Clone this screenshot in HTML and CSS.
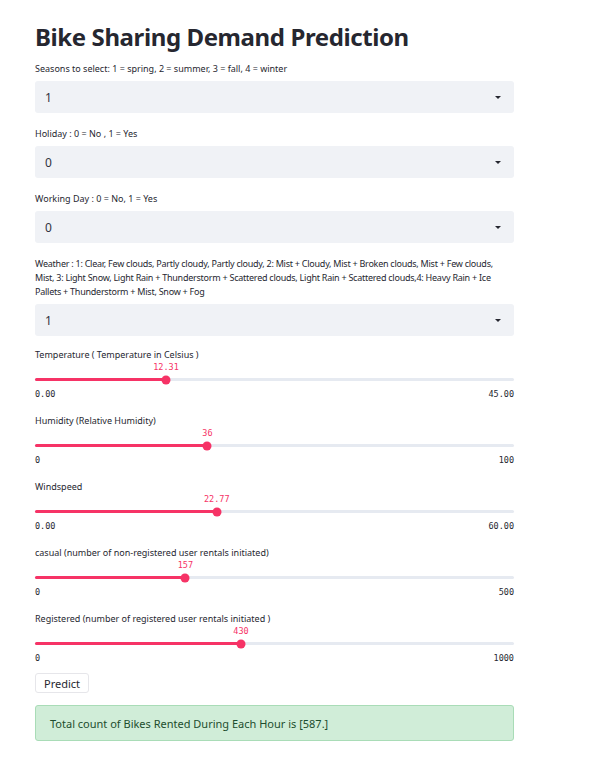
FILE: index.html
```html
<!DOCTYPE html>
<html>
<head>
<meta charset="utf-8">
<link rel="stylesheet" href="styles.css">
</head>
<body>
<main class="app">
  <h1 class="title">Bike Sharing Demand Prediction</h1>

  <div class="field">
    <label class="label">Seasons to select: 1 = spring, 2 = summer, 3 = fall, 4 = winter</label>
    <div class="select"><span class="select-value">1</span><span class="caret"></span></div>
  </div>

  <div class="field">
    <label class="label">Holiday : 0 = No , 1 = Yes</label>
    <div class="select"><span class="select-value">0</span><span class="caret"></span></div>
  </div>

  <div class="field">
    <label class="label">Working Day : 0 = No, 1 = Yes</label>
    <div class="select"><span class="select-value">0</span><span class="caret"></span></div>
  </div>

  <div class="field field-weather">
    <label class="label label-long">Weather : 1: Clear, Few clouds, Partly cloudy, Partly cloudy, 2: Mist + Cloudy, Mist + Broken clouds, Mist + Few clouds, Mist, 3: Light Snow, Light Rain + Thunderstorm + Scattered clouds, Light Rain + Scattered clouds,4: Heavy Rain + Ice Pallets + Thunderstorm + Mist, Snow + Fog</label>
    <div class="select"><span class="select-value">1</span><span class="caret"></span></div>
  </div>

  <div class="slider">
    <label class="label">Temperature ( Temperature in Celsius )</label>
    <div class="slider-body" style="--p: 27.36%">
      <div class="slider-value">12.31</div>
      <div class="track"><div class="fill"></div><div class="thumb"></div></div>
    </div>
    <div class="ticks"><span>0.00</span><span>45.00</span></div>
  </div>

  <div class="slider">
    <label class="label">Humidity (Relative Humidity)</label>
    <div class="slider-body" style="--p: 36%">
      <div class="slider-value">36</div>
      <div class="track"><div class="fill"></div><div class="thumb"></div></div>
    </div>
    <div class="ticks"><span>0</span><span>100</span></div>
  </div>

  <div class="slider">
    <label class="label">Windspeed</label>
    <div class="slider-body" style="--p: 37.95%">
      <div class="slider-value">22.77</div>
      <div class="track"><div class="fill"></div><div class="thumb"></div></div>
    </div>
    <div class="ticks"><span>0.00</span><span>60.00</span></div>
  </div>

  <div class="slider">
    <label class="label">casual (number of non-registered user rentals initiated)</label>
    <div class="slider-body" style="--p: 31.4%">
      <div class="slider-value">157</div>
      <div class="track"><div class="fill"></div><div class="thumb"></div></div>
    </div>
    <div class="ticks"><span>0</span><span>500</span></div>
  </div>

  <div class="slider">
    <label class="label">Registered (number of registered user rentals initiated )</label>
    <div class="slider-body" style="--p: 43%">
      <div class="slider-value">430</div>
      <div class="track"><div class="fill"></div><div class="thumb"></div></div>
    </div>
    <div class="ticks"><span>0</span><span>1000</span></div>
  </div>

  <div class="actions"><button class="btn">Predict</button></div>

  <div class="success">Total count of Bikes Rented During Each Hour is [587.]</div>
</main>
</body>
</html>
```

FILE: styles.css
```css
* { box-sizing: border-box; }
html, body { margin: 0; padding: 0; background: #ffffff; }
body {
  font-family: "Noto Sans", "Open Sans", sans-serif;
  color: #262730;
}
.app {
  width: 479px;
  margin-left: 35px;
  padding-top: 21px;
  display: flex;
  flex-direction: column;
}
.title {
  margin: 0 0 9px 0;
  font-size: 24px;
  line-height: 32px;
  font-weight: 700;
  color: #262730;
  letter-spacing: -0.4px;
}
.field { display: flex; flex-direction: column; margin-bottom: 14px; }
.label {
  display: block;
  font-family: "Noto Sans", "Open Sans", sans-serif;
  font-size: 9px;
  line-height: 14px;
  color: #262730;
  margin-bottom: 5px;
}
.label-long { letter-spacing: -0.25px; }
.field-weather { margin-bottom: 12px; }
.select {
  height: 32px;
  background: #f0f2f6;
  border-radius: 3px;
  display: flex;
  align-items: center;
  justify-content: space-between;
  padding: 0 13px 0 10px;
}
.select-value {
  font-size: 12px;
  color: #31333f;
}
.caret {
  width: 0; height: 0;
  border-left: 3px solid transparent;
  border-right: 3px solid transparent;
  border-top: 3px solid #262730;
}
.slider { display: flex; flex-direction: column; margin-bottom: 13px; }
.slider .label { margin-bottom: 0; }
.slider-body { position: relative; height: 24px; }
.slider-value {
  position: absolute;
  top: -1px;
  left: var(--p);
  transform: translateX(-50%);
  font-family: "DejaVu Sans Mono", "Liberation Mono", monospace;
  font-size: 8.5px;
  line-height: 12px;
  color: #f63366;
  white-space: nowrap;
}
.track {
  position: absolute;
  left: 0; right: 0;
  top: 16px;
  height: 3px;
  background: #e6eaf1;
  border-radius: 2px;
}
.fill {
  position: absolute;
  left: 0; top: 0; bottom: 0;
  width: var(--p);
  background: #f63366;
  border-radius: 2px;
}
.thumb {
  position: absolute;
  top: 50%;
  left: var(--p);
  width: 9px; height: 9px;
  border-radius: 50%;
  background: #f63366;
  transform: translate(-50%, -50%);
}
.ticks {
  display: flex;
  justify-content: space-between;
  margin-top: 1px;
  font-family: "DejaVu Sans Mono", "Liberation Mono", monospace;
  font-size: 8.5px;
  line-height: 14px;
  color: #262730;
}
.actions { display: flex; margin-top: -5px; }
.btn {
  font-family: "Noto Sans", "Open Sans", sans-serif;
  font-size: 11px;
  color: #262730;
  background: #ffffff;
  border: 1px solid #e6e6ea;
  border-radius: 3px;
  height: 20px;
  padding: 0 8px;
  width: 54px;
}
.success {
  margin-top: 12px;
  height: 36px;
  display: flex;
  align-items: center;
  padding-left: 14px;
  background: #d0edd8;
  border: 1px solid #a9dcb7;
  border-radius: 3px;
  font-size: 11px;
  color: #1d4d2e;
}
```
